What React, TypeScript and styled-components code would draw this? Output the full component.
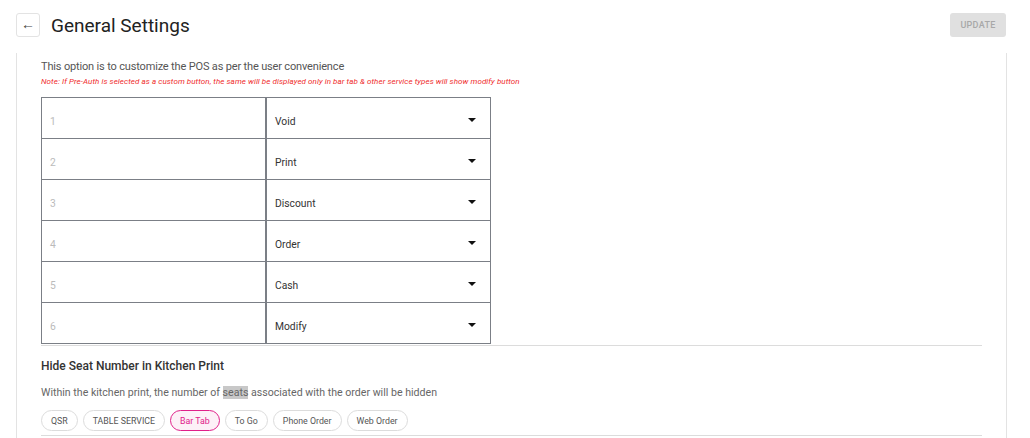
import styled, { createGlobalStyle } from 'styled-components';

const GlobalStyle = createGlobalStyle`
  body {
    margin: 0;
    background: #fff;
    font-family: Roboto, 'Liberation Sans', sans-serif;
    color: #333;
  }
`;

const buttons = ['Void', 'Print', 'Discount', 'Order', 'Cash', 'Modify'];
const services = ['QSR', 'TABLE SERVICE', 'Bar Tab', 'To Go', 'Phone Order', 'Web Order'];

const App: React.FC = () => {
  return (
    <Page>
      <GlobalStyle />
      <Header>
        <TitleGroup>
          <BackButton aria-label="back">&#8592;</BackButton>
          <Title>General Settings</Title>
        </TitleGroup>
        <UpdateButton disabled>UPDATE</UpdateButton>
      </Header>
      <Panel>
        <Intro>This option is to customize the POS as per the user convenience</Intro>
        <Note>
          Note: If Pre-Auth is selected as a custom button, the same will be displayed only in bar tab &amp; other
          service types will show modify button
        </Note>
        <ButtonTable>
          {buttons.map((name, i) => (
            <Row key={name}>
              <IndexCell>{i + 1}</IndexCell>
              <SelectCell>
                <span>{name}</span>
                <Caret />
              </SelectCell>
            </Row>
          ))}
        </ButtonTable>
        <Divider />
        <SectionTitle>Hide Seat Number in Kitchen Print</SectionTitle>
        <Description>
          Within the kitchen print, the number of <Mark>seats</Mark> associated with the order will be hidden
        </Description>
        <Chips>
          {services.map((s) => (
            <Chip key={s} active={s === 'Bar Tab'}>
              {s}
            </Chip>
          ))}
        </Chips>
        <Divider />
      </Panel>
    </Page>
  );
};

const Page = styled.div`
  width: 1030px;
  height: 438px;
  overflow: hidden;
`;

const Header = styled.div`
  display: flex;
  align-items: center;
  justify-content: space-between;
  padding: 13px 24px 0 16px;
  height: 24px;
`;

const TitleGroup = styled.div`
  display: flex;
  align-items: center;
  gap: 11px;
`;

const BackButton = styled.button`
  width: 24px;
  height: 24px;
  padding: 0 0 2px;
  border: 1px solid #e3e3e3;
  border-radius: 3px;
  background: #fff;
  color: #444;
  font-size: 14px;
  line-height: 1;
  display: flex;
  align-items: center;
  justify-content: center;
`;

const Title = styled.h1`
  margin: 0;
  font-size: 19px;
  font-weight: 400;
  color: #222;
`;

const UpdateButton = styled.button`
  width: 56px;
  height: 24px;
  border: none;
  border-radius: 3px;
  background: #e0e0e0;
  color: #a8a8a8;
  font-family: Roboto, sans-serif;
  font-size: 9px;
  font-weight: 500;
  letter-spacing: 0.3px;
`;

const Panel = styled.div`
  margin: 16px 0 0 16px;
  width: 941px;
  height: 400px;
  padding: 6px 24px 0;
  border-left: 1px solid #e3e3e3;
  border-right: 1px solid #e3e3e3;
`;

const Intro = styled.p`
  margin: 0;
  font-size: 11px;
  letter-spacing: -0.16px;
  line-height: 16px;
  color: #555;
`;

const Note = styled.p`
  margin: 1px 0 0;
  font-size: 8px;
  letter-spacing: 0.08px;
  line-height: 12px;
  font-style: italic;
  color: #ef2b2b;
`;

const ButtonTable = styled.div`
  margin-top: 9px;
  width: 448px;
  border: 1px solid #7b7f86;
`;

const Row = styled.div`
  display: grid;
  grid-template-columns: 225px 1fr;
  height: 40px;
  & + & {
    border-top: 1px solid #7b7f86;
  }
`;

const IndexCell = styled.div`
  display: flex;
  align-items: center;
  padding: 7px 0 0 8px;
  font-size: 10.3px;
  color: #bbb;
  border-right: 2px solid #7b7f86;
`;

const SelectCell = styled.div`
  display: flex;
  align-items: center;
  justify-content: space-between;
  padding: 7px 14px 0 8px;
  font-size: 10.3px;
  color: #333;
`;

const Caret = styled.span`
  width: 0;
  height: 0;
  border-left: 4px solid transparent;
  border-right: 4px solid transparent;
  border-top: 4px solid #111;
  margin-top: -4px;
`;

const Divider = styled.hr`
  margin: 1px 0 0;
  border: none;
  border-top: 1px solid #dcdcdc;
`;

const SectionTitle = styled.h3`
  margin: 12px 0 0;
  font-size: 12px;
  line-height: 16px;
  font-weight: 500;
  color: #333;
`;

const Description = styled.p`
  margin: 12px 0 0;
  font-size: 10.6px;
  line-height: 14px;
  color: #666;
`;

const Mark = styled.span`
  background: #c8c8c8;
`;

const Chips = styled.div`
  display: flex;
  gap: 5px;
  margin: 10px 0 4px;
`;

const Chip = styled.span<{ active?: boolean }>`
  height: 19px;
  padding: 0 9px;
  display: flex;
  align-items: center;
  border-radius: 11px;
  font-size: 8.8px;
  border: 1px solid ${(p) => (p.active ? '#e0218a' : '#dcdcdc')};
  background: ${(p) => (p.active ? '#fdf0f7' : '#fff')};
  color: ${(p) => (p.active ? '#e0218a' : '#555')};
`;

export default App;
